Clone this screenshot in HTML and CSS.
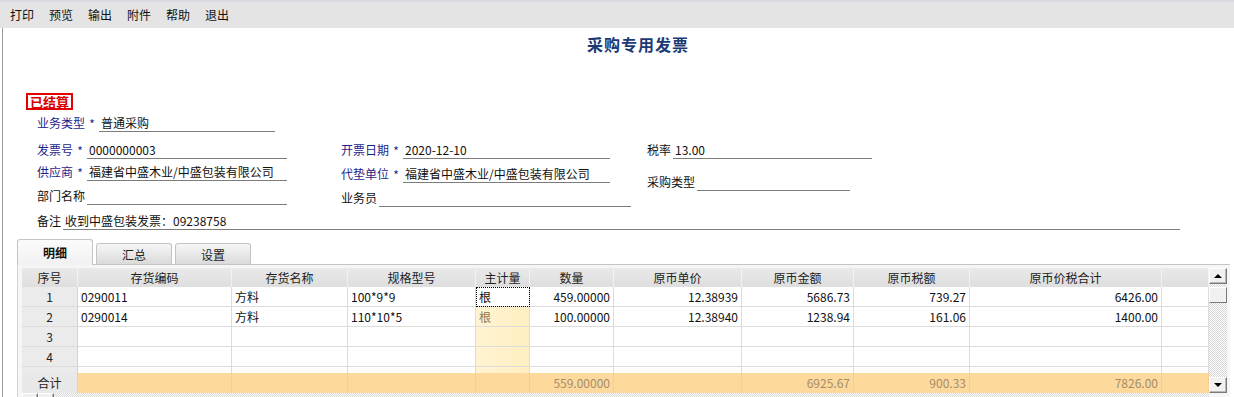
FILE: index.html
```html
<!DOCTYPE html>
<html lang="zh-CN">
<head>
    <meta charset="UTF-8">
    <title>采购专用发票</title>
    <link rel="stylesheet" href="styles.css">
</head>
<body>
    <div class="menubar">
        <span>打印</span><span>预览</span><span>输出</span><span>附件</span><span>帮助</span><span>退出</span>
    </div>

    <div class="window">
        <div class="title">采购专用发票</div>

        <div class="stamp-line"><span class="stamp">已结算</span></div>

        <div class="form">
            <div class="field h22">
                <span class="label req">业务类型</span><span class="star">*</span>
                <span class="value w176">普通采购</span>
            </div>

            <div class="cols">
                <div class="col col-left">
                    <div class="field h27">
                        <span class="label req">发票号</span><span class="star">*</span>
                        <span class="value w200 num">0000000003</span>
                    </div>
                    <div class="field h22">
                        <span class="label req">供应商</span><span class="star">*</span>
                        <span class="value w200">福建省中盛木业/中盛包装有限公司</span>
                    </div>
                    <div class="field h24">
                        <span class="label">部门名称</span>
                        <span class="value w200 gap"></span>
                    </div>
                </div>
                <div class="col col-mid">
                    <div class="field h27">
                        <span class="label req">开票日期</span><span class="star">*</span>
                        <span class="value w207 num">2020-12-10</span>
                    </div>
                    <div class="field h24">
                        <span class="label req">代垫单位</span><span class="star">*</span>
                        <span class="value w207">福建省中盛木业/中盛包装有限公司</span>
                    </div>
                    <div class="field h24">
                        <span class="label">业务员</span>
                        <span class="value w252 gap"></span>
                    </div>
                </div>
                <div class="col col-right">
                    <div class="field h27">
                        <span class="label">税率</span>
                        <span class="value w199 gap num">13.00</span>
                    </div>
                    <div class="field h32">
                        <span class="label">采购类型</span>
                        <span class="value w153 gap"></span>
                    </div>
                </div>
            </div>

            <div class="field h23">
                <span class="label">备注</span>
                <span class="value w1117 gap">收到中盛包装发票：<span class="num">09238758</span></span>
            </div>
        </div>

        <div class="tabs">
            <div class="tab active">明细</div>
            <div class="tab">汇总</div>
            <div class="tab">设置</div>
        </div>

        <div class="panel">
            <div class="grid-wrap">
                <div class="grid">
                    <div class="grid-scroll">
                        <div class="row head">
                            <div>序号</div><div>存货编码</div><div>存货名称</div><div>规格型号</div><div>主计量</div>
                            <div>数量</div><div>原币单价</div><div>原币金额</div><div>原币税额</div><div>原币价税合计</div><div></div>
                        </div>
                        <div class="row">
                            <div class="idx">1</div><div class="num">0290011</div><div>方料</div><div class="num">100*9*9</div>
                            <div class="unit focus">根</div>
                            <div class="num r">459.00000</div><div class="num r">12.38939</div><div class="num r">5686.73</div>
                            <div class="num r">739.27</div><div class="num r">6426.00</div><div></div>
                        </div>
                        <div class="row">
                            <div class="idx">2</div><div class="num">0290014</div><div>方料</div><div class="num">110*10*5</div>
                            <div class="unit soft">根</div>
                            <div class="num r">100.00000</div><div class="num r">12.38940</div><div class="num r">1238.94</div>
                            <div class="num r">161.06</div><div class="num r">1400.00</div><div></div>
                        </div>
                        <div class="row">
                            <div class="idx">3</div><div></div><div></div><div></div><div class="unit"></div>
                            <div></div><div></div><div></div><div></div><div></div><div></div>
                        </div>
                        <div class="row">
                            <div class="idx">4</div><div></div><div></div><div></div><div class="unit"></div>
                            <div></div><div></div><div></div><div></div><div></div><div></div>
                        </div>
                        <div class="row">
                            <div class="idx"></div><div></div><div></div><div></div><div class="unit"></div>
                            <div></div><div></div><div></div><div></div><div></div><div></div>
                        </div>
                    </div>
                    <div class="row foot">
                        <div class="idx">合计</div><div></div><div></div><div></div><div></div>
                        <div class="num r">559.00000</div><div></div><div class="num r">6925.67</div>
                        <div class="num r">900.33</div><div class="num r">7826.00</div><div></div>
                    </div>
                    <div class="hscroll">
                        <span class="sbtn"></span><span class="sbtn"></span>
                    </div>
                </div>

                <div class="vscroll">
                    <div class="sbtn up"><span class="arrow-up"></span></div>
                    <div class="thumb"></div>
                    <div class="track"></div>
                    <div class="sbtn down"><span class="arrow-down"></span></div>
                </div>
            </div>
        </div>
    </div>
</body>
</html>
```

FILE: styles.css
```css
/* 整体 */
body {
    margin: 0;
    background-color: #ffffff;
    font-family: "Noto Sans CJK SC", "Liberation Sans", sans-serif;
    font-size: 12px;
    color: #111111;
    overflow: hidden;
}

/* 顶部菜单 */
.menubar {
    height: 26px;
    border-top: 2px solid #dcdae2;
    background-color: #e4e4e4;
    display: flex;
    align-items: center;
    gap: 15px;
    padding-left: 10px;
    line-height: 14px;
}

.window {
    margin-left: 2px;
    border-left: 1px solid #9a9a9a;
    height: 380px;
}

.title {
    height: 32px;
    line-height: 32px;
    text-align: center;
    padding-left: 39px;
    font-size: 16px;
    font-weight: bold;
    letter-spacing: 1px;
    color: #1b3a74;
}

/* 已结算 标记 */
.stamp-line {
    margin: 33px 0 0 23px;
    height: 17px;
}
.stamp {
    display: inline-block;
    height: 13px;
    line-height: 13px;
    padding: 0 2px;
    border: 2px solid #e30000;
    color: #d80000;
    font-size: 13px;
    font-weight: bold;
}

/* 表头字段 */
.form {
    margin-left: 34px;
}
.cols {
    display: flex;
}
.col-left { width: 304px; }
.col-mid { width: 306px; }

.field {
    display: flex;
    align-items: flex-end;
    line-height: 14px;
}
.h22 { height: 22px; }
.h23 { height: 23px; }
.h24 { height: 24px; }
.h27 { height: 27px; }
.h32 { height: 32px; }

.label {
    padding-bottom: 2px;
    white-space: nowrap;
}
.label.req {
    color: #1f1f8c;
}
.star {
    width: 14px;
    text-align: center;
    color: #1f1f8c;
    padding-bottom: 1px;
}
.value {
    padding: 1px 0 1px 2px;
    border-bottom: 1px solid #7c7c7c;
    white-space: nowrap;
    box-sizing: border-box;
}
.value.gap { margin-left: 2px; }
.w153 { width: 153px; }
.w176 { width: 176px; }
.w199 { width: 199px; }
.w200 { width: 200px; }
.w207 { width: 207px; }
.w252 { width: 252px; }
.w1117 { width: 1117px; }

.num {
    font-variant-numeric: tabular-nums;
}

/* 页签 */
.tabs {
    margin: 9px 0 0 14px;
    height: 25px;
    display: flex;
    align-items: flex-end;
    gap: 3px;
    position: relative;
    z-index: 1;
}
.tab {
    width: 76px;
    height: 21px;
    box-sizing: border-box;
    border: 1px solid #c4c4c4;
    border-bottom: none;
    border-radius: 3px 3px 0 0;
    background: linear-gradient(#f6f6f6, #dadada);
    text-align: center;
    line-height: 22px;
    color: #222222;
}
.tab.active {
    height: 26px;
    margin-bottom: -1px;
    background: linear-gradient(#fbfbfb, #f1f1f1);
    font-weight: bold;
    line-height: 26px;
    color: #111111;
}

/* 明细表格 */
.panel {
    margin: 0 4px 0 14px;
    border-top: 1px solid #c4c4c4;
    border-left: 1px solid #d4d4d4;
    padding: 3px 0 0 4px;
    background-color: #f6f6f6;
}
.grid-wrap {
    display: flex;
}
.grid {
    width: 1187px;
    background-color: #ffffff;
}
.grid-scroll {
    height: 105px;
    overflow: hidden;
}

.row {
    display: grid;
    grid-template-columns: 56px 154px 116px 128px 54px 84px 128px 112px 116px 192px 47px;
    height: 20px;
}
.row > div {
    box-sizing: border-box;
    border-right: 1px solid #dcdcdc;
    border-bottom: 1px solid #dcdcdc;
    padding: 0 3px;
    line-height: 19px;
    white-space: nowrap;
    overflow: hidden;
}
.row .r { text-align: right; }

.row.head {
    height: 19px;
    background: linear-gradient(#e9e9e9, #dedede);
}
.row.head > div {
    border-right-color: #f2f2f2;
    border-bottom: none;
    text-align: center;
    line-height: 19px;
    color: #222222;
}

.row .idx {
    background-color: #ebebeb;
    text-align: center;
    color: #222222;
    border-right-color: #d2d2d2;
}
.row .unit {
    background: linear-gradient(90deg, #fff4d2, #ffeec0);
}
.row .unit.focus {
    background: #ffffff;
    outline: 1px dotted #000000;
    outline-offset: -1px;
}
.row .unit.soft {
    color: #8c7a58;
}

.row.foot > div {
    background-color: #fdd99b;
    border-right-color: #f6cf8c;
    border-bottom: none;
    color: #a48c6c;
}
.row.foot .idx {
    background-color: #e8e8e8;
    color: #222222;
}

/* 滚动条 */
.hscroll {
    height: 16px;
    display: flex;
    background: repeating-conic-gradient(#d6d6d6 0 25%, #ffffff 0 50%) 0 0 / 2px 2px;
}
.vscroll {
    width: 18px;
    height: 125px;
    display: flex;
    flex-direction: column;
    background: repeating-conic-gradient(#d6d6d6 0 25%, #ffffff 0 50%) 0 0 / 2px 2px;
}
.sbtn {
    display: flex;
    align-items: center;
    justify-content: center;
    width: 16px;
    height: 15px;
    box-sizing: border-box;
    background-color: #f0f0f0;
    border: 1px solid;
    border-color: #ffffff #7a7a7a #7a7a7a #ffffff;
    box-shadow: inset -1px -1px 0 #b8b8b8;
}
.vscroll .sbtn {
    width: 18px;
    height: 16px;
}
.thumb {
    height: 16px;
    margin-top: 3px;
    box-sizing: border-box;
    background-color: #f0f0f0;
    border: 1px solid;
    border-color: #ffffff #7a7a7a #7a7a7a #ffffff;
}
.track {
    flex: 1;
}
.arrow-up {
    width: 0;
    height: 0;
    border-left: 4px solid transparent;
    border-right: 4px solid transparent;
    border-bottom: 4px solid #000000;
}
.arrow-down {
    width: 0;
    height: 0;
    border-left: 4px solid transparent;
    border-right: 4px solid transparent;
    border-top: 4px solid #000000;
}
```
